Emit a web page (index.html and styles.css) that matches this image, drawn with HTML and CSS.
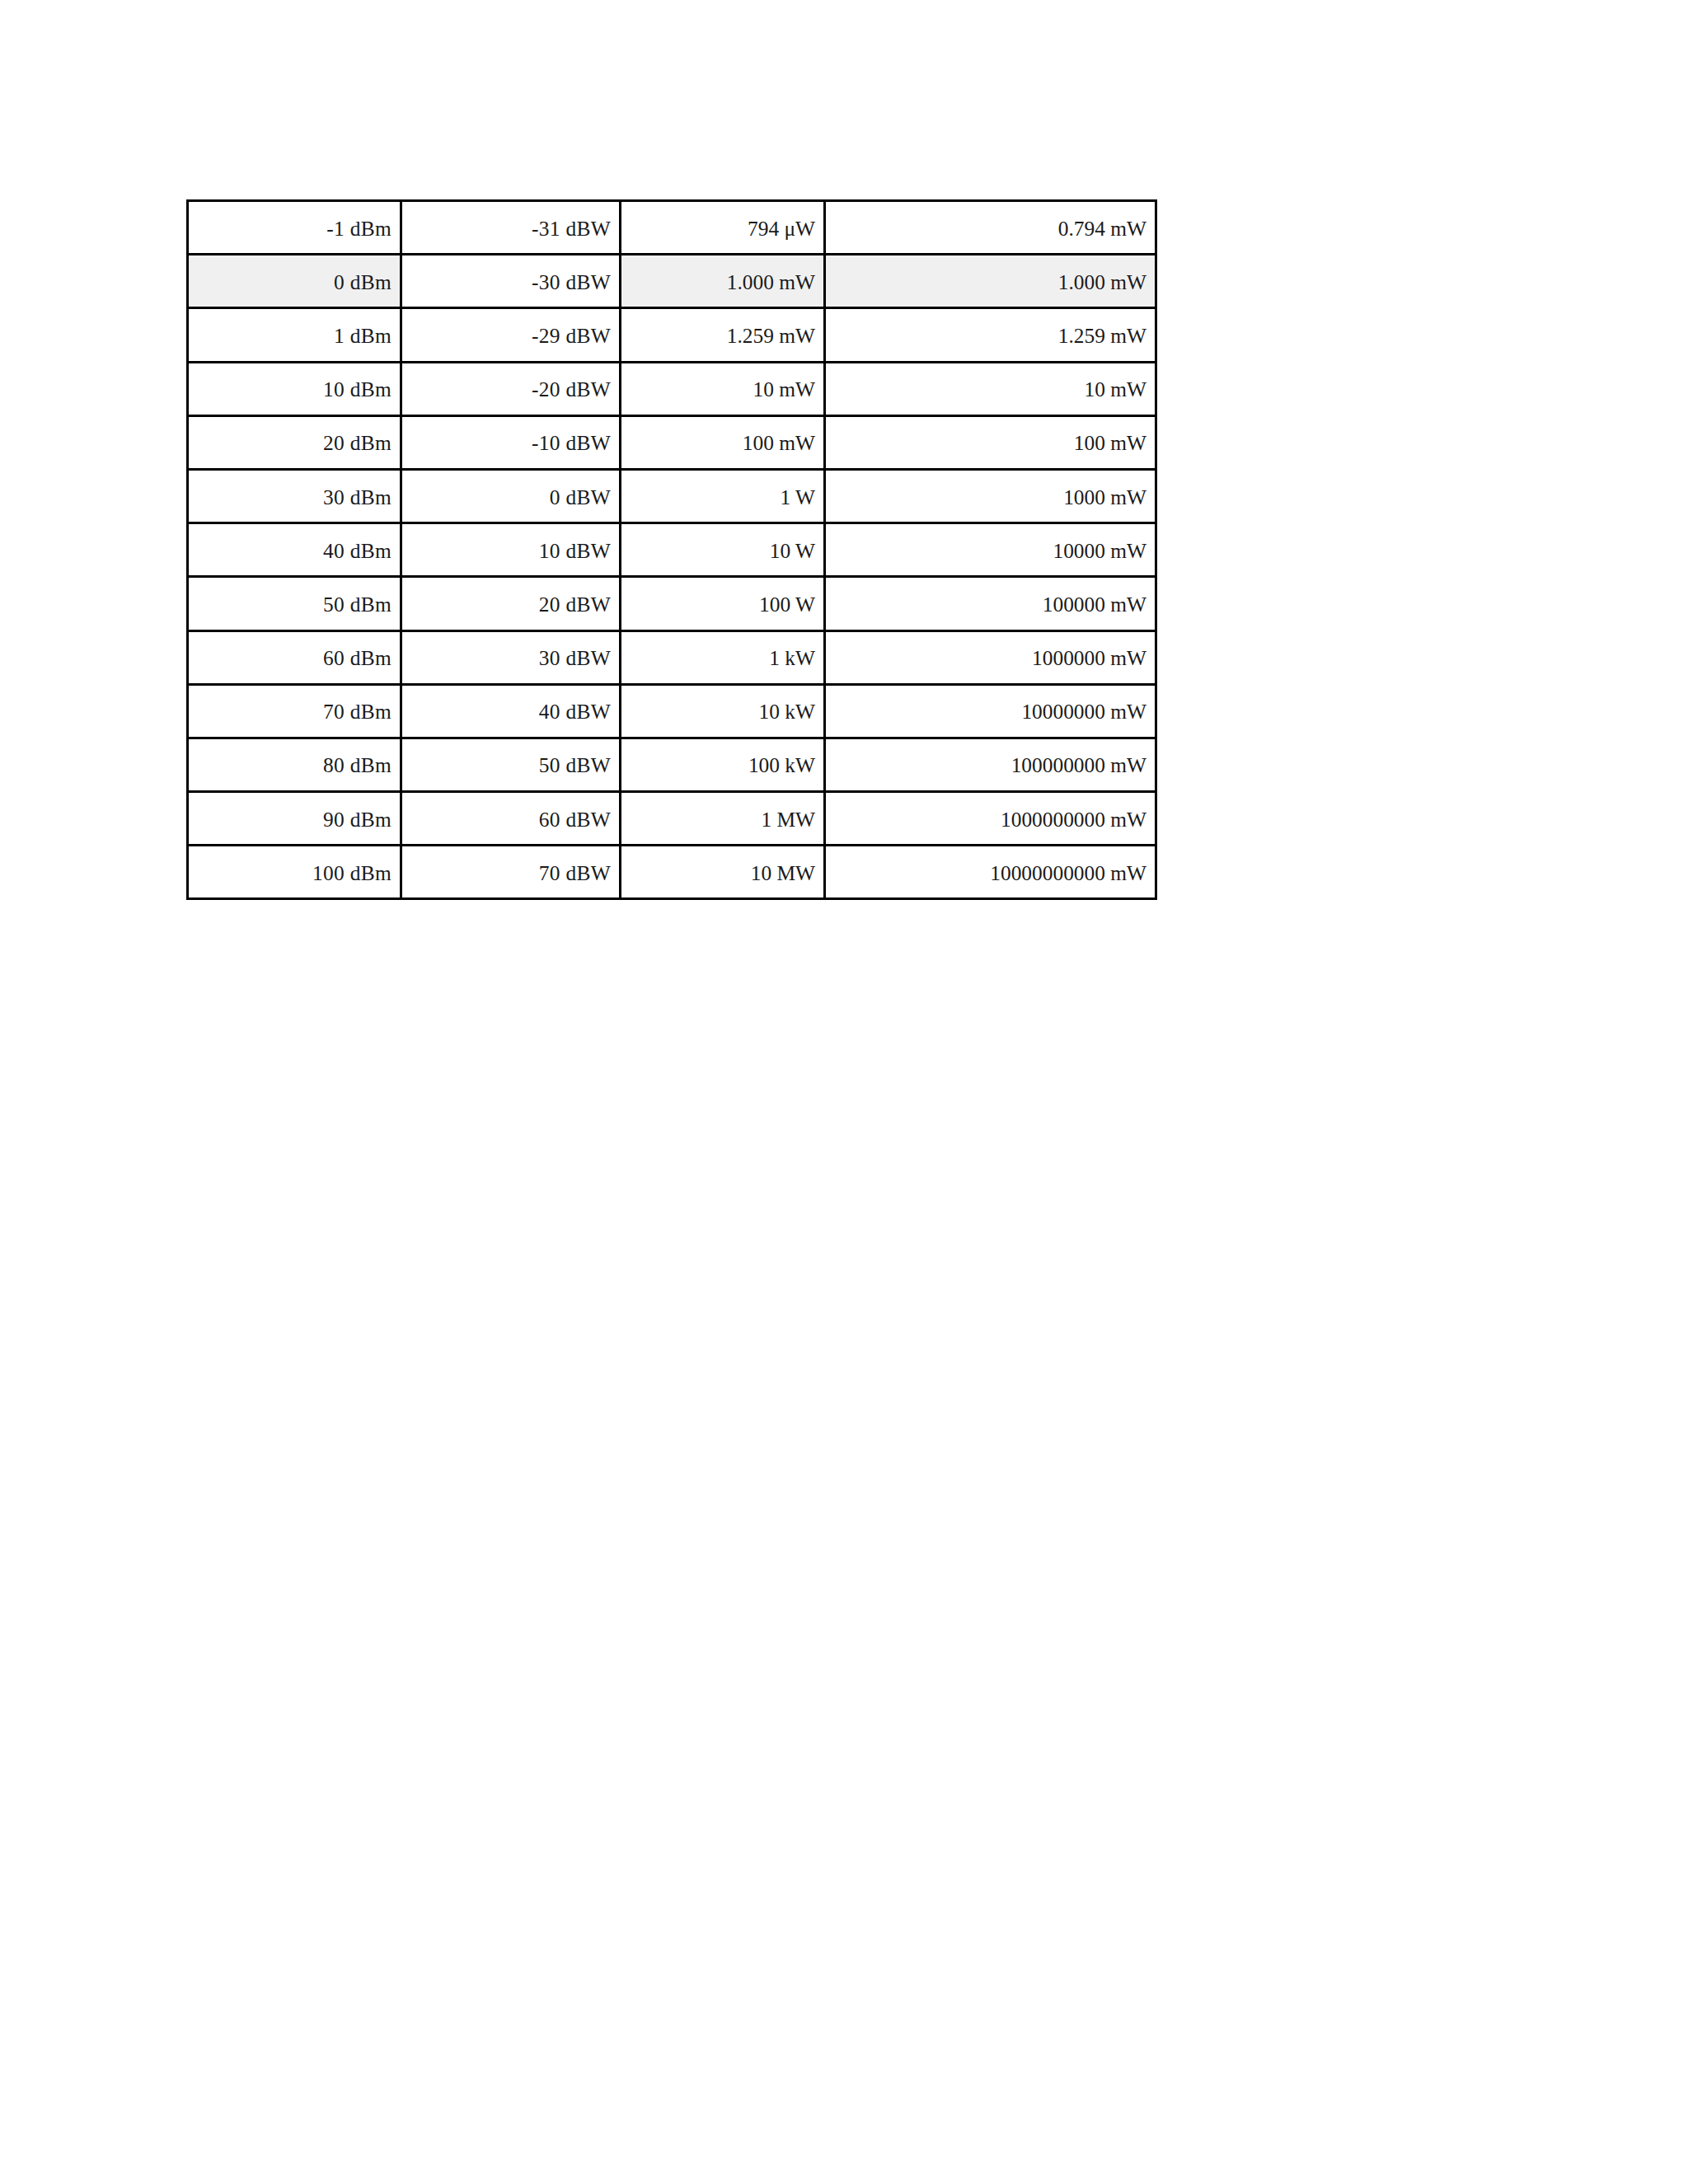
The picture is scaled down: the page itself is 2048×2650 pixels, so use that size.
FILE: index.html
```html
<!DOCTYPE html>
<html>
<head>
<meta charset="utf-8">
<link rel="stylesheet" href="styles.css">
</head>
<body>
<table class="power">
  <colgroup>
    <col class="c1"><col class="c2"><col class="c3"><col class="c4">
  </colgroup>
  <tbody>
    <tr><td class="db">-1 dBm</td><td class="db">-31 dBW</td><td>794 μW</td><td>0.794 mW</td></tr>
    <tr><td class="db hl">0 dBm</td><td class="db">-30 dBW</td><td class="hl">1.000 mW</td><td class="hl">1.000 mW</td></tr>
    <tr><td class="db">1 dBm</td><td class="db">-29 dBW</td><td>1.259 mW</td><td>1.259 mW</td></tr>
    <tr><td class="db">10 dBm</td><td class="db">-20 dBW</td><td>10 mW</td><td>10 mW</td></tr>
    <tr><td class="db">20 dBm</td><td class="db">-10 dBW</td><td>100 mW</td><td>100 mW</td></tr>
    <tr><td class="db">30 dBm</td><td class="db">0 dBW</td><td>1 W</td><td>1000 mW</td></tr>
    <tr><td class="db">40 dBm</td><td class="db">10 dBW</td><td>10 W</td><td>10000 mW</td></tr>
    <tr><td class="db">50 dBm</td><td class="db">20 dBW</td><td>100 W</td><td>100000 mW</td></tr>
    <tr><td class="db">60 dBm</td><td class="db">30 dBW</td><td>1 kW</td><td>1000000 mW</td></tr>
    <tr><td class="db">70 dBm</td><td class="db">40 dBW</td><td>10 kW</td><td>10000000 mW</td></tr>
    <tr><td class="db">80 dBm</td><td class="db">50 dBW</td><td>100 kW</td><td>100000000 mW</td></tr>
    <tr><td class="db">90 dBm</td><td class="db">60 dBW</td><td>1 MW</td><td>1000000000 mW</td></tr>
    <tr><td class="db">100 dBm</td><td class="db">70 dBW</td><td>10 MW</td><td>10000000000 mW</td></tr>
  </tbody>
</table>
</body>
</html>
```
FILE: styles.css
```css
html, body {
  margin: 0;
  padding: 0;
  background: #ffffff;
}

body {
  font-family: "Liberation Serif", "Times New Roman", serif;
  color: #1a1a1a;
}

.power {
  margin: 242px 0 0 226px;
  border-collapse: separate;
  border-spacing: 3px;
  background: #000000;
  table-layout: fixed;
  width: 1177px;
}

.c1 { width: 256px; }
.c2 { width: 263px; }
.c3 { width: 245px; }
.c4 { width: 399px; }

.power td {
  background: #ffffff;
  height: 62.2px;
  padding: 1px 10px 0 0;
  box-sizing: border-box;
  text-align: right;
  vertical-align: middle;
  font-size: 25.4px;
  line-height: 28px;
  white-space: nowrap;
}

.power td.db {
  letter-spacing: 0.3px;
}

.power td.hl {
  background: #f0f0f0;
}
```
